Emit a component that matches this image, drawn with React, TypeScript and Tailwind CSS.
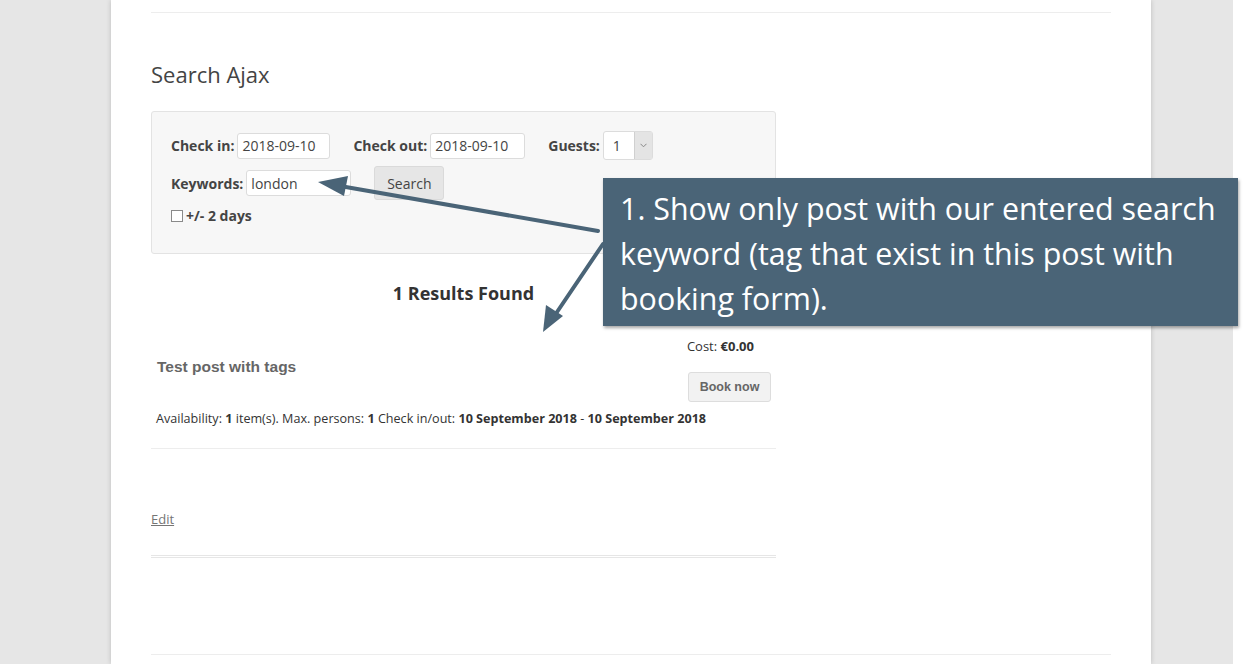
import React from 'react';

const open = { fontFamily: '"Open Sans", "Liberation Sans", sans-serif' };
const arial = { fontFamily: '"Liberation Sans", Arial, sans-serif' };

function Field({ label, value, width }: { label: string; value: string; width: string }) {
  return (
    <div className="flex items-center gap-[3px]">
      <span className="text-[14px] font-bold text-[#444]">{label}</span>
      <div className={`${width} h-[26px] bg-white border border-[#dcdcdc] rounded-[3px] flex items-center px-[4px] text-[14px] text-[#444]`}>
        {value}
      </div>
    </div>
  );
}

function Arrows() {
  return (
    <svg className="absolute left-0 top-0 pointer-events-none" width="1246" height="664">
      <g stroke="#4a6477" strokeWidth="4" fill="none" strokeLinecap="round">
        <line x1="598" y1="231" x2="340" y2="186" />
        <line x1="603" y1="244" x2="555" y2="315" />
      </g>
      <g fill="#4a6477">
        <polygon points="318,182 348,176 344,196" />
        <polygon points="543,332 546,305 563,316" />
      </g>
    </svg>
  );
}

export default function App() {
  return (
    <div className="relative w-[1246px] h-[664px] overflow-hidden bg-white flex" style={open}>
      <div className="w-[111px] h-full bg-[#e6e6e6]" />
      <div className="w-[1040px] h-full bg-white px-[40px] shadow-[0_0_5px_rgba(0,0,0,0.18)] relative z-10">
        <div className="mt-[12px] h-px bg-[#ededed]" />
        <div className="w-[625px]">
          <h1 className="mt-[45px] text-[22px] leading-[32px] font-normal text-[#444]">Search Ajax</h1>

          <div className="mt-[21px] h-[143px] bg-[#f7f7f7] border border-[#e3e3e3] rounded-[3px] pl-[19px] pt-[19px]">
            <div className="flex items-center">
              <Field label="Check in:" value="2018-09-10" width="w-[93px]" />
              <div className="ml-[23px]">
                <Field label="Check out:" value="2018-09-10" width="w-[95px]" />
              </div>
              <div className="ml-[23px] flex items-center gap-[3px]">
                <span className="text-[14px] font-bold text-[#444]">Guests:</span>
                <div className="w-[50px] h-[29px] bg-white border border-[#dcdcdc] rounded-[3px] flex">
                  <div className="flex-1 flex items-center pl-[9px] text-[14px] text-[#444]">1</div>
                  <div className="w-[18px] bg-[#e4e4e4] border-l border-[#d0d0d0] flex items-center justify-center">
                    <svg width="7" height="5" viewBox="0 0 7 5">
                      <path d="M0.5 0.8 L3.5 3.8 L6.5 0.8" stroke="#888" strokeWidth="1" fill="none" />
                    </svg>
                  </div>
                </div>
              </div>
            </div>

            <div className="flex items-center mt-[6px]">
              <div className="flex items-center gap-[3px]">
                <span className="text-[14px] font-bold text-[#444]">Keywords:</span>
                <div className="w-[105px] h-[26px] bg-white border border-[#dcdcdc] rounded-[3px] flex items-center px-[4px] text-[14px] text-[#444]">
                  london
                </div>
              </div>
              <div className="ml-[23px] w-[70px] h-[34px] bg-[#e6e6e6] border border-[#dadada] rounded-[3px] flex items-center justify-center text-[14px] text-[#444]">
                Search
              </div>
            </div>

            <div className="flex items-center mt-[5px] gap-[3px]">
              <div className="w-[12px] h-[12px] bg-white border border-[#8a8a8a]" />
              <span className="text-[14px] font-bold text-[#444]">+/- 2 days</span>
            </div>
          </div>

          <div className="mt-[27px] text-center text-[18px] leading-[24px] font-bold text-[#333]">1 Results Found</div>

          <div className="mt-[32px] flex items-start justify-between pl-[6px] pr-[5px]">
            <div className="pt-[21px] text-[15.5px] leading-[18px] font-bold text-[#666]" style={arial}>Test post with tags</div>
            <div className="flex flex-col items-end">
              <div className="text-[13px] leading-[18px] text-[#333] pr-[17px]">
                Cost: <b>€0.00</b>
              </div>
              <div className="mt-[17px] w-[83px] h-[30px] bg-[#f2f2f2] border border-[#dddddd] rounded-[3px] flex items-center justify-center text-[12.5px] font-bold text-[#666]" style={arial}>
                Book now
              </div>
            </div>
          </div>

          <div className="mt-[8px] pl-[5px] text-[12.6px] leading-[18px] text-[#333]">
            Availability: <b>1</b> item(s). Max. persons: <b>1</b> Check in/out: <b>10 September 2018</b> - <b>10 September 2018</b>
          </div>

          <div className="mt-[20px] h-px bg-[#ededed]" />

          <div className="mt-[61px] text-[13px] leading-[18px] text-[#757575] underline">Edit</div>

          <div className="mt-[27px] h-px bg-[#e6e6e6]" />
          <div className="mt-px h-px bg-[#e6e6e6]" />
        </div>
        <div className="mt-[96px] h-px bg-[#ededed]" />
      </div>
      <div className="w-[82px] h-full bg-[#e6e6e6]" />
      <div className="flex-1 h-full bg-white" />

      <div className="absolute left-[603px] top-[178px] w-[635px] h-[148px] bg-[#4a6477] shadow-[1px_2px_3px_rgba(0,0,0,0.35)] pl-[17px] pt-[8px] text-[30.4px] leading-[45px] text-white z-20">
        1. Show only post with our entered search keyword (tag that exist in this post with booking form).
      </div>
      <div className="absolute inset-0 z-30 pointer-events-none">
        <Arrows />
      </div>
    </div>
  );
}
